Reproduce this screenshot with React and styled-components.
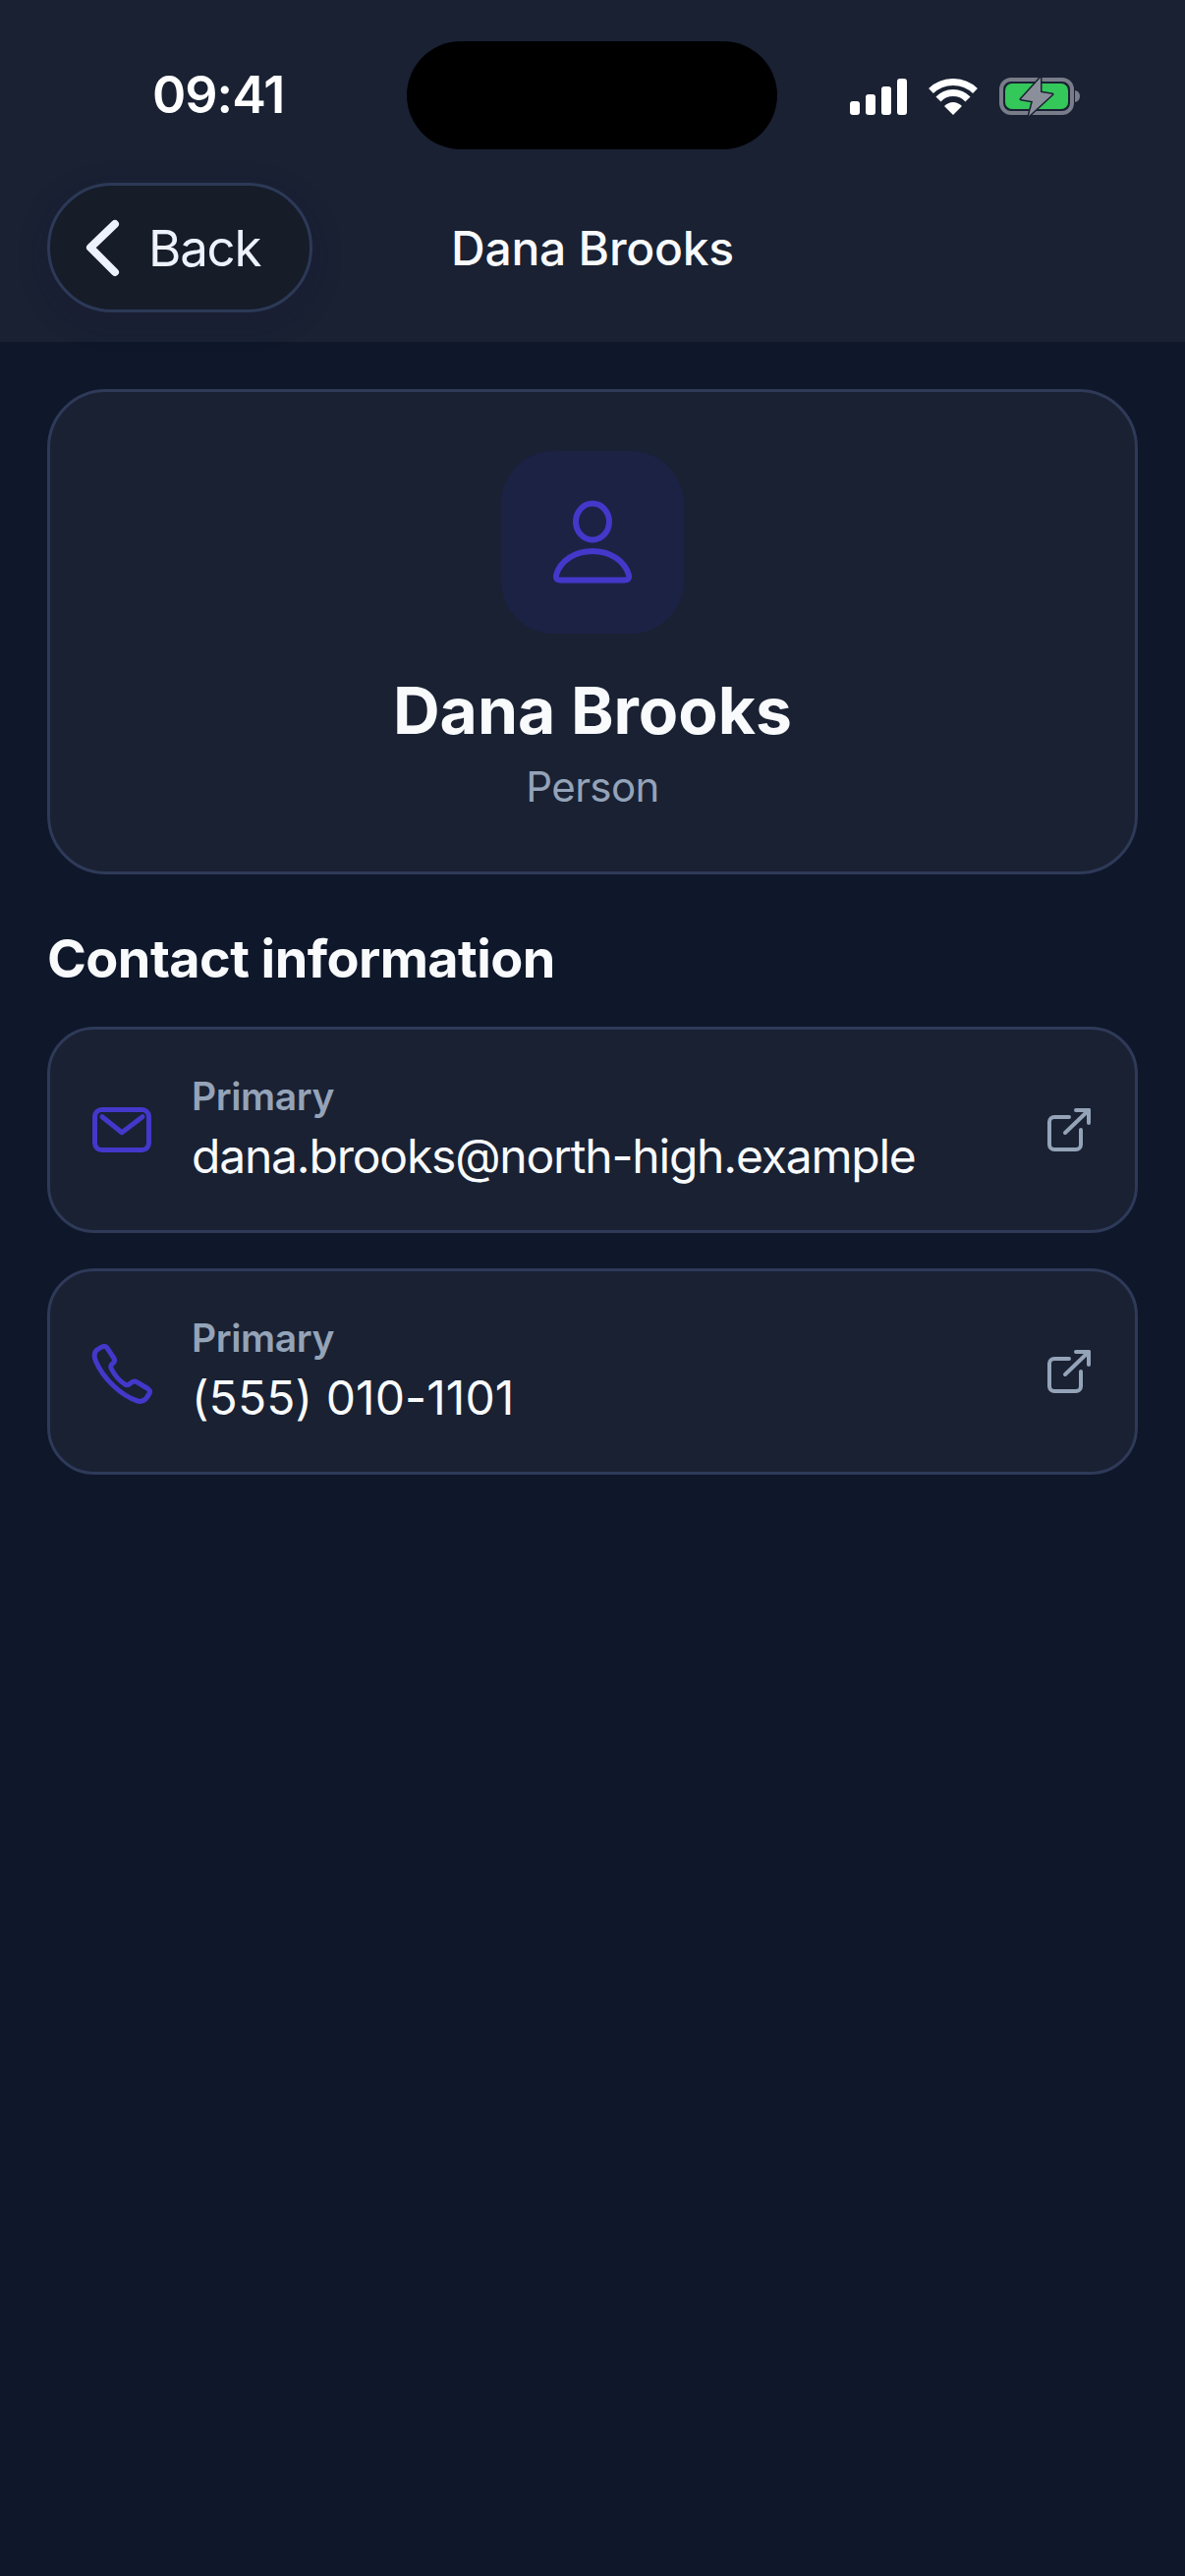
// App.jsx
import React from "react";
import styled, { createGlobalStyle } from "styled-components";

const GlobalStyle = createGlobalStyle`
  html, body {
    margin: 0;
    padding: 0;
    background: #0f172a;
  }
  * {
    box-sizing: border-box;
  }
`;

const Page = styled.div`
  width: 1206px;
  min-height: 2622px;
  background: #0f172a;
  font-family: Inter, "Noto Sans", sans-serif;
  color: #f8fafc;
`;

const Header = styled.header`
  height: 348px;
  background: #192133;
`;

const StatusBar = styled.div`
  height: 186px;
  padding-top: 42px;
  display: grid;
  grid-template-columns: 414px 377px 1fr;
  align-items: start;
`;

const Time = styled.div`
  padding: 35px 0 0 155px;
  font-size: 52px;
  line-height: 40px;
  font-weight: 600;
  letter-spacing: -1px;
  color: #ffffff;
`;

const Island = styled.div`
  height: 110px;
  border-radius: 55px;
  background: #000;
`;

const StatusIcons = styled.div`
  display: flex;
  align-items: center;
  padding: 35px 0 0 74px;
  gap: 22px;
`;

const NavRow = styled.div`
  display: grid;
  grid-template-columns: 1fr auto 1fr;
  align-items: center;
  padding: 0 48px;
`;

const BackButton = styled.button`
  justify-self: start;
  width: 270px;
  height: 132px;
  padding: 0 0 0 34px;
  display: flex;
  align-items: center;
  gap: 28px;
  border: 3px solid #2c3957;
  border-radius: 66px;
  background: #161c28;
  box-shadow: 0 9px 30px rgba(30, 20, 50, 0.25);
  color: #eef2ff;
  font-family: inherit;
  font-size: 51px;
  font-weight: 400;
  letter-spacing: -1.2px;
`;

const NavTitle = styled.h2`
  margin: 0;
  font-size: 48px;
  font-weight: 500;
  letter-spacing: -0.25px;
  color: #f8fafc;
`;

const Content = styled.main`
  padding: 48px 48px 0;
`;

const HeroCard = styled.section`
  padding: 60px 60px 62px;
  display: flex;
  flex-direction: column;
  align-items: center;
  background: #192133;
  border: 3px solid #2e3a58;
  border-radius: 60px;
`;

const AvatarTile = styled.div`
  flex: none;
  width: 186px;
  height: 186px;
  display: flex;
  align-items: center;
  justify-content: center;
  border-radius: 54px;
  background: #1c2244;
`;

const HeroName = styled.h1`
  margin: 39px 0 0;
  font-size: 66px;
  line-height: 78px;
  font-weight: 700;
  color: #f8fafc;
`;

const HeroKind = styled.div`
  margin-top: 15px;
  font-size: 42px;
  line-height: 48px;
  letter-spacing: -0.6px;
  color: #94a3b8;
`;

const SectionTitle = styled.h3`
  margin: 53px 0 0;
  font-size: 54px;
  line-height: 66px;
  font-weight: 700;
  letter-spacing: -0.6px;
  color: #f8fafc;
`;

const ContactList = styled.div`
  margin-top: 36px;
  display: flex;
  flex-direction: column;
  gap: 36px;
`;

const ContactCard = styled.div`
  height: 210px;
  padding: 0 43px 0 39px;
  display: flex;
  align-items: center;
  gap: 37px;
  background: #192133;
  border: 3px solid #2e3a58;
  border-radius: 48px;
`;

const ContactText = styled.div`
  flex: 1;
  min-width: 0;
  padding-bottom: 3px;
`;

const ContactLabel = styled.div`
  font-size: 39px;
  line-height: 51px;
  font-weight: 600;
  letter-spacing: -0.4px;
  color: #94a3b8;
`;

const ContactValue = styled.div`
  margin-top: 6px;
  font-size: 48px;
  line-height: 60px;
  letter-spacing: ${(p) => p.$tracking}px;
  color: #f8fafc;
`;

const LineIcon = styled.svg`
  flex: none;
  display: block;
  fill: none;
  stroke: ${(p) => p.$color || "#4338ca"};
  stroke-width: ${(p) => p.$weight || 5};
  stroke-linecap: round;
  stroke-linejoin: round;
`;

const SignalIcon = () => (
  <svg width="58" height="37" viewBox="0 0 58 37" fill="#fff">
    <rect x="0" y="23" width="10" height="14" rx="3" />
    <rect x="16" y="16" width="10" height="21" rx="3" />
    <rect x="32" y="8" width="10" height="29" rx="3" />
    <rect x="48" y="0" width="10" height="37" rx="3" />
  </svg>
);

const WifiIcon = () => (
  <svg width="50" height="37" viewBox="0 0 50 37">
    <path d="M2.5 12.5A32.6 32.6 0 0 1 47.5 12.5" fill="none" stroke="#fff" strokeWidth="7" />
    <path d="M10 21A20.5 20.5 0 0 1 40 21" fill="none" stroke="#fff" strokeWidth="7" />
    <path d="M25 37L16 28Q25 20 34 28Z" fill="#fff" />
  </svg>
);

const BatteryIcon = () => (
  <svg width="82" height="42" viewBox="0 0 82 42">
    <rect x="2" y="4" width="72" height="34" rx="10" fill="none" stroke="#787d89" strokeWidth="4" />
    <rect x="6" y="8" width="64" height="26" rx="7" fill="#34c759" />
    <path
      d="M42 2L22 24L34 26L30 41L54 19L42 17Z"
      fill="#8b8f99"
      stroke="#192133"
      strokeWidth="3"
      strokeLinejoin="round"
      paintOrder="stroke"
    />
    <path d="M77 15Q82 16 82 21Q82 26 77 27Z" fill="#787d89" />
  </svg>
);

const ChevronIcon = () => (
  <LineIcon width="38" height="60" viewBox="0 0 38 60" $color="#eef2ff" $weight={8}>
    <path d="M32 6L7 30L32 55" />
  </LineIcon>
);

const PersonIcon = () => (
  <LineIcon width="96" height="96" viewBox="0 0 96 96" $weight={6}>
    <ellipse cx="48" cy="27" rx="17" ry="18.5" />
    <path d="M15 86.5H81Q86 86.5 85 81.5C81 67 66 57 48 57C30 57 15 67 11 81.5Q10 86.5 15 86.5Z" />
  </LineIcon>
);

const MailIcon = () => (
  <LineIcon width="68" height="68" viewBox="0 0 68 68">
    <rect x="6.5" y="13.5" width="55" height="41" rx="7" />
    <path d="M14 20.7L34 36.7L55 20.7" />
  </LineIcon>
);

const PhoneIcon = () => (
  <LineIcon width="68" height="68" viewBox="0 0 68 68">
    <path d="M12.5 9.5L15 8.5Q17.5 7.8 19 10L26 20.5Q27.5 23 25.5 25L23.5 27Q22 29 23.5 31.5C27 38.5 31 43 37 47Q39.5 48.5 41.5 47L44.5 44.8Q47 43.2 49.5 44.8L60.5 51.5Q63.5 53.5 62 56.5L59 61Q55.5 65.5 50 64C33 58.5 15 41 7.5 23.5Q4.5 16.5 8 12.5Z" />
  </LineIcon>
);

const ExternalIcon = () => (
  <LineIcon width="48" height="48" viewBox="0 0 48 48" $color="#94a3b8" $weight={4}>
    <path d="M24 11H9a5 5 0 0 0-5 5V39a5 5 0 0 0 5 5H31a5 5 0 0 0 5-5V24" />
    <path d="M20 27L44 4" />
    <path d="M31 4H44V17" />
  </LineIcon>
);

const contacts = [
  { id: "email", icon: <MailIcon />, label: "Primary", value: "dana.brooks@north-high.example", tracking: -1.2 },
  { id: "phone", icon: <PhoneIcon />, label: "Primary", value: "(555) 010-1101", tracking: 0.1 },
];

const App = () => (
  <Page>
    <GlobalStyle />
    <Header>
      <StatusBar>
        <Time>09:41</Time>
        <Island />
        <StatusIcons>
          <SignalIcon />
          <WifiIcon />
          <BatteryIcon />
        </StatusIcons>
      </StatusBar>
      <NavRow>
        <BackButton>
          <ChevronIcon />
          Back
        </BackButton>
        <NavTitle>Dana Brooks</NavTitle>
      </NavRow>
    </Header>
    <Content>
      <HeroCard>
        <AvatarTile>
          <PersonIcon />
        </AvatarTile>
        <HeroName>Dana Brooks</HeroName>
        <HeroKind>Person</HeroKind>
      </HeroCard>
      <SectionTitle>Contact information</SectionTitle>
      <ContactList>
        {contacts.map((contact) => (
          <ContactCard key={contact.id}>
            {contact.icon}
            <ContactText>
              <ContactLabel>{contact.label}</ContactLabel>
              <ContactValue $tracking={contact.tracking}>{contact.value}</ContactValue>
            </ContactText>
            <ExternalIcon />
          </ContactCard>
        ))}
      </ContactList>
    </Content>
  </Page>
);

export default App;
